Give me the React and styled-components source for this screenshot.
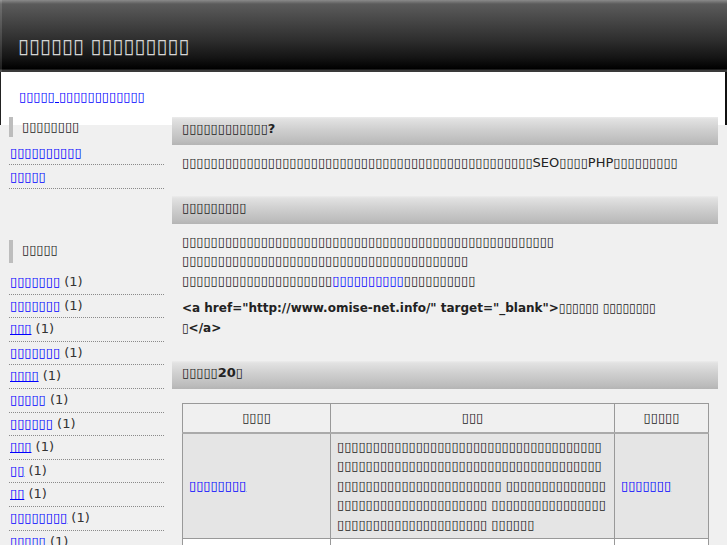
import React from 'react';
import styled, { createGlobalStyle } from 'styled-components';

// the page text shows as missing-glyph boxes
const X = '\u25AF';
const b = (n) => X.repeat(n);

const GlobalStyle = createGlobalStyle`
  body {
    margin: 0;
    background: #f0f0f0;
    font-family: "DejaVu Sans", sans-serif;
    font-size: 13px;
    line-height: 19.5px;
    color: #222;
  }
  a {
    color: #0000ff;
  }
`;

const Header = styled.header`
  height: 72px;
  box-sizing: border-box;
  padding: 35px 18px 0;
  background: linear-gradient(#8a8a8a 0, #5b5b5b 4px, #474747 20px, #2e2e2e 40px, #141414 58px, #000 69px, #3a3a3a 70px, #3a3a3a 72px);
  box-shadow: inset 2px 0 0 rgba(255, 255, 255, 0.12);
`;

const Title = styled.h1`
  margin: 0;
  font-size: 20px;
  line-height: 22px;
  font-weight: normal;
  color: #d6d6d6;
`;

const Band = styled.div`
  height: 53px;
  box-sizing: border-box;
  padding: 15px 18px 0;
  background: #fff;
  border-left: 1px solid #222;
  border-right: 2px solid #111;
`;

const Main = styled.div`
  display: flex;
  margin-top: -8px;
`;

const Sidebar = styled.aside`
  width: 172px;
  box-sizing: border-box;
  padding: 0 8px 0 9px;
  flex-shrink: 0;
`;

const SideBlock = styled.div`
  margin-bottom: ${(p) => p.$gap || 0}px;
`;

const SideHeading = styled.h3`
  margin: 0 0 ${(p) => (p.$tall ? 8 : 4)}px;
  height: ${(p) => (p.$tall ? 23 : 20)}px;
  line-height: ${(p) => (p.$tall ? 19 : 19)}px;
  padding-left: 9px;
  border-left: 4px solid #bdbdbd;
  font-size: 13px;
  font-weight: normal;
  color: #222;
`;

const SideList = styled.ul`
  list-style: none;
  margin: 0;
  padding: 0;
`;

const SideItem = styled.li`
  padding: 3px 0 3px 1px;
  line-height: ${(p) => (p.$dense ? 16.6 : 17)}px;
  border-bottom: 1px dotted #8a8a8a;
  color: #333;
`;

const Content = styled.main`
  width: 546px;
  flex-shrink: 0;
`;

const SectionBar = styled.h2`
  margin: 0;
  height: 28px;
  box-sizing: border-box;
  padding: 0 10px 4px;
  line-height: 24px;
  font-size: 13px;
  font-weight: bold;
  color: #222;
  background: linear-gradient(#ececec 0, #e2e2e2 2px, #d0d0d0 12px, #bdbdbd 24px, #b4b4b4 28px);
`;

const SectionBody = styled.div`
  padding: 8px 10px 23px;
`;

const Para = styled.p`
  margin: 0;
  word-break: break-all;
`;

const Code = styled.p`
  margin: 9px 0 0;
  max-width: 476px;
  font-size: 12px;
  font-weight: bold;
  word-break: break-all;
  color: #222;
`;

const Table = styled.table`
  margin: 6px 0 0;
  width: 526px;
  table-layout: fixed;
  border-collapse: collapse;
  border: 1px solid #999;
`;

const Th = styled.th`
  box-sizing: border-box;
  width: ${(p) => p.$w}px;
  height: 29px;
  padding: 0 6px;
  border: 1px solid #999;
  border-bottom: 2px solid #aaa;
  background: #f0f0f0;
  font-weight: bold;
`;

const Td = styled.td`
  padding: 3px 6px 4px;
  border: 1px solid #999;
  background: ${(p) => (p.$odd ? '#e5e5e5' : '#fff')};
  vertical-align: middle;
  word-break: break-all;
`;

const cats = [7, 7, 3, 7, 4, 5, 6, 3, 2, 2, 8, 5];

export default function App() {
  return (
    <>
      <GlobalStyle />
      <Header>
        <Title>{`${b(6)} ${b(9)}`}</Title>
      </Header>
      <Band>
        <a href="#">{`${b(5)} ${b(12)}`}</a>
      </Band>
      <Main>
        <Sidebar>
          <SideBlock $gap={51}>
            <SideHeading>{b(8)}</SideHeading>
            <SideList>
              <SideItem><a href="#">{b(10)}</a></SideItem>
              <SideItem><a href="#">{b(5)}</a></SideItem>
            </SideList>
          </SideBlock>
          <SideBlock>
            <SideHeading $tall>{b(5)}</SideHeading>
            <SideList>
              {cats.map((n, i) => (
                <SideItem key={i} $dense>
                  <a href="#">{b(n)}</a> (1)
                </SideItem>
              ))}
            </SideList>
          </SideBlock>
        </Sidebar>
        <Content>
          <SectionBar>{`${b(12)}?`}</SectionBar>
          <SectionBody>
            <Para>{`${b(49)}SEO${b(4)}PHP${b(9)}`}</Para>
          </SectionBody>
          <SectionBar>{b(9)}</SectionBar>
          <SectionBody>
            <Para>
              {b(52)}
              <br />
              {b(40)}
              <br />
              {b(21)}
              <a href="#">{b(10)}</a>
              {b(10)}
            </Para>
            <Code>{`<a href="http://www.omise-net.info/" target="_blank">${b(6)} ${b(9)}</a>`}</Code>
          </SectionBody>
          <SectionBar>{`${b(5)}20${b(1)}`}</SectionBar>
          <SectionBody>
            <Table>
              <thead>
                <tr>
                  <Th $w={148}>{b(4)}</Th>
                  <Th $w={284}>{b(3)}</Th>
                  <Th $w={94}>{b(5)}</Th>
                </tr>
              </thead>
              <tbody>
                <tr>
                  <Td $odd><a href="#">{b(8)}</a></Td>
                  <Td $odd>{`${b(97)} ${b(35)} ${b(37)} ${b(6)}`}</Td>
                  <Td $odd><a href="#">{b(7)}</a></Td>
                </tr>
                <tr>
                  <Td><a href="#">{b(6)}</a></Td>
                  <Td>{`${b(60)} ${b(20)}`}</Td>
                  <Td><a href="#">{b(5)}</a></Td>
                </tr>
              </tbody>
            </Table>
          </SectionBody>
        </Content>
      </Main>
    </>
  );
}
